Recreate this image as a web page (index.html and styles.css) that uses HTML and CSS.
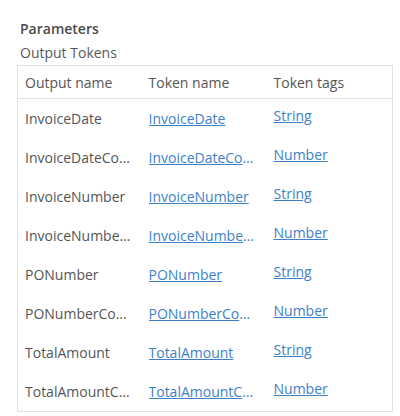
FILE: index.html
```html
<!DOCTYPE html>
<html>
<head>
<meta charset="utf-8">
<link rel="stylesheet" href="styles.css">
</head>
<body>
<div class="panel">
  <div class="title">Parameters</div>
  <div class="subtitle">Output Tokens</div>
  <table class="tokens">
    <colgroup>
      <col class="c1"><col class="c2"><col class="c3">
    </colgroup>
    <thead>
      <tr><th>Output name</th><th>Token name</th><th>Token tags</th></tr>
    </thead>
    <tbody>
      <tr><td><span class="cell">InvoiceDate</span></td><td><a class="cell link" href="#">InvoiceDate</a></td><td><a class="tag" href="#">String</a></td></tr>
      <tr><td><span class="cell">InvoiceDateConfidence</span></td><td><a class="cell link" href="#">InvoiceDateConfidence</a></td><td><a class="tag" href="#">Number</a></td></tr>
      <tr><td><span class="cell">InvoiceNumber</span></td><td><a class="cell link" href="#">InvoiceNumber</a></td><td><a class="tag" href="#">String</a></td></tr>
      <tr><td><span class="cell">InvoiceNumberConfidence</span></td><td><a class="cell link" href="#">InvoiceNumberConfidence</a></td><td><a class="tag" href="#">Number</a></td></tr>
      <tr><td><span class="cell">PONumber</span></td><td><a class="cell link" href="#">PONumber</a></td><td><a class="tag" href="#">String</a></td></tr>
      <tr><td><span class="cell">PONumberConfidence</span></td><td><a class="cell link" href="#">PONumberConfidence</a></td><td><a class="tag" href="#">Number</a></td></tr>
      <tr><td><span class="cell">TotalAmount</span></td><td><a class="cell link" href="#">TotalAmount</a></td><td><a class="tag" href="#">String</a></td></tr>
      <tr><td><span class="cell">TotalAmountConfidence</span></td><td><a class="cell link" href="#">TotalAmountConfidence</a></td><td><a class="tag" href="#">Number</a></td></tr>
    </tbody>
  </table>
</div>
</body>
</html>
```
FILE: styles.css
```css
html, body {
  margin: 0;
  padding: 0;
  background: #fff;
}
body {
  font-family: "Open Sans", "Noto Sans", sans-serif;
  font-size: 14px;
  color: #555;
}
.panel {
  padding: 17px 7px 0 17px;
}
.title {
  font-weight: 600;
  font-size: 14px;
  line-height: 24px;
  padding-left: 3px;
  color: #4a4a4a;
}
.subtitle {
  line-height: 24px;
  padding-left: 3px;
  color: #595959;
}
.tokens {
  width: 376px;
  border-collapse: collapse;
  table-layout: fixed;
  border: 1px solid #e1e1e1;
}
.c1 { width: 124px; }
.c2 { width: 125px; }
.tokens th {
  font-weight: 400;
  text-align: left;
  height: 32px;
  padding: 0 7px;
  border-bottom: 1px solid #e1e1e1;
  color: #555;
}
.tokens td {
  height: 39px;
  padding: 0 7px;
  vertical-align: middle;
}
.cell {
  display: block;
  white-space: nowrap;
  overflow: hidden;
  text-overflow: ellipsis;
  max-width: 108px;
}
.link, .tag {
  color: #3d7fc8;
  text-decoration: underline;
}
.tag {
  position: relative;
  top: -3px;
}
```
